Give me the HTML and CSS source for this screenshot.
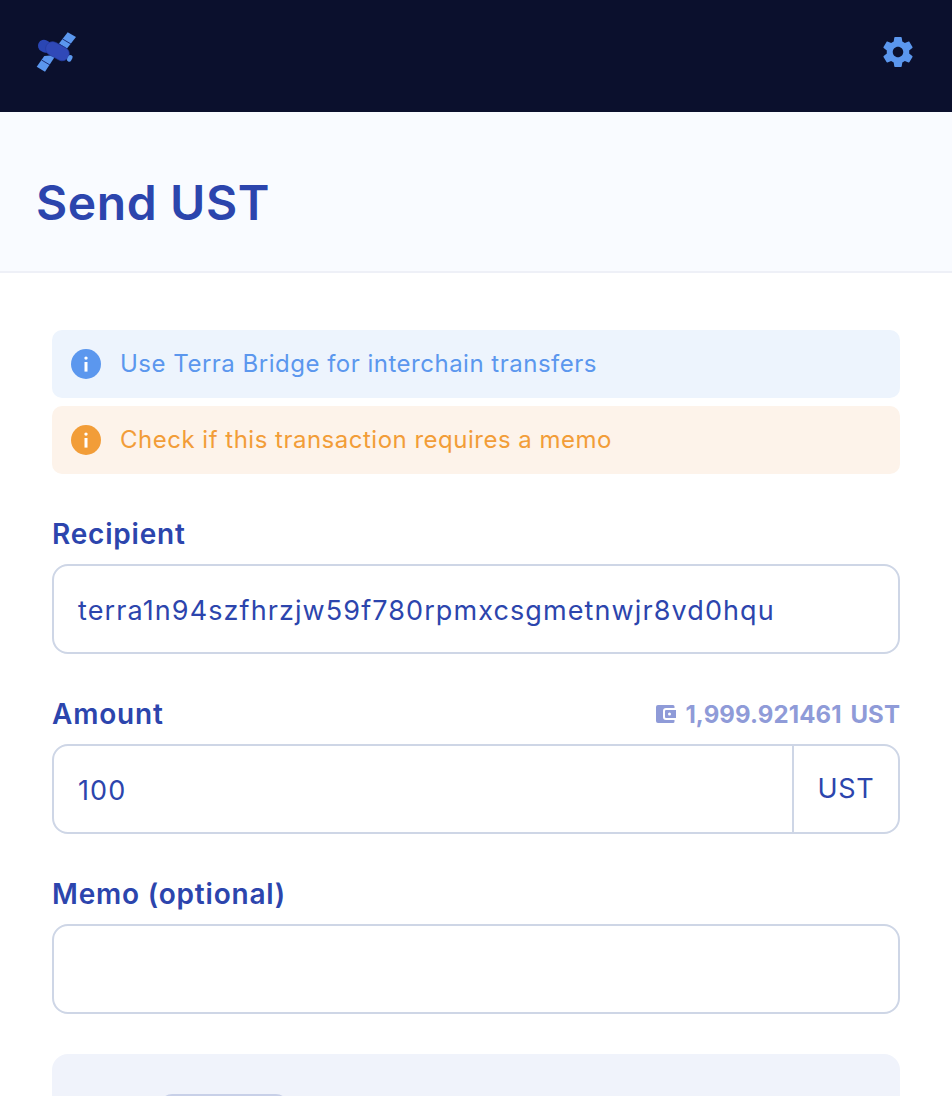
FILE: index.html
```html
<!DOCTYPE html>
<html lang="en">
<head>
<meta charset="utf-8">
<title>Send UST</title>
<link rel="stylesheet" href="styles.css">
</head>
<body>
<header class="topbar">
  <svg class="logo" viewBox="35 31 42 42" width="42" height="42" aria-hidden="true">
    <polygon points="67.700,32.300 76,37 67,48.500 59,43.500" fill="#5b97ee"/>
    <line x1="62.500" y1="39" x2="71" y2="44" stroke="#1c2f78" stroke-width="1"/>
    <polygon points="44.300,56 36.700,66.700 45,71.700 56,55" fill="#5b97ee"/>
    <line x1="41.500" y1="60" x2="50" y2="65" stroke="#1c2f78" stroke-width="1"/>
    <g transform="rotate(28 57 51)">
      <rect x="37" y="46.500" width="14" height="12" rx="6" fill="#2a46b4"/>
      <rect x="45" y="44" width="25" height="14" rx="7" fill="#3049b8" stroke="#243a9c" stroke-width="0.6"/>
      <rect x="69.500" y="48" width="4.500" height="7" rx="2.200" fill="#5b97ee"/>
    </g>
  </svg>
  <svg class="gear" viewBox="0 0 24 24" width="36" height="36" aria-hidden="true">
    <path fill="#5b97ee" d="M19.43 12.98c.04-.32.07-.64.07-.98s-.03-.66-.07-.98l2.11-1.65c.19-.15.24-.42.12-.64l-2-3.46c-.12-.22-.39-.3-.61-.22l-2.49 1c-.52-.4-1.08-.73-1.69-.98l-.38-2.65C14.46 2.18 14.25 2 14 2h-4c-.25 0-.46.18-.49.42l-.38 2.65c-.61.25-1.17.59-1.69.98l-2.49-1c-.23-.09-.49 0-.61.22l-2 3.46c-.13.22-.07.49.12.64l2.11 1.65c-.04.32-.07.65-.07.98s.03.66.07.98l-2.11 1.65c-.19.15-.24.42-.12.64l2 3.46c.12.22.39.3.61.22l2.49-1c.52.4 1.08.73 1.69.98l.38 2.65c.03.24.24.42.49.42h4c.25 0 .46-.18.49-.42l.38-2.65c.61-.25 1.17-.59 1.69-.98l2.49 1c.23.09.49 0 .61-.22l2-3.46c.12-.22.07-.49-.12-.64l-2.11-1.65zM12 15.500c-1.930 0-3.500-1.570-3.500-3.500s1.570-3.500 3.500-3.500 3.500 1.570 3.500 3.500-1.570 3.500-3.500 3.500z"/>
  </svg>
</header>
<section class="titleband">
  <h1 class="title">Send UST</h1>
</section>
<main class="content">
  <div class="alerts">
    <div class="alert alert-info">
      <svg class="alert-icon" viewBox="0 0 30 30" width="30" height="30" aria-hidden="true">
        <circle cx="15" cy="15" r="15" fill="#5b97ee"/>
        <rect x="13.300" y="7.400" width="3.400" height="3.400" rx="1.700" fill="#fff"/>
        <rect x="13.500" y="13" width="3" height="9.600" fill="#fff"/>
      </svg>
      <span>Use Terra Bridge for interchain transfers</span>
    </div>
    <div class="alert alert-warn">
      <svg class="alert-icon" viewBox="0 0 30 30" width="30" height="30" aria-hidden="true">
        <circle cx="15" cy="15" r="15" fill="#f29d38"/>
        <rect x="13.300" y="7.400" width="3.400" height="3.400" rx="1.700" fill="#fff"/>
        <rect x="13.500" y="13" width="3" height="9.600" fill="#fff"/>
      </svg>
      <span>Check if this transaction requires a memo</span>
    </div>
  </div>

  <div class="field">
    <div class="field-head"><span class="label">Recipient</span></div>
    <div class="box"><span class="value">terra1n94szfhrzjw59f780rpmxcsgmetnwjr8vd0hqu</span></div>
  </div>

  <div class="field">
    <div class="field-head">
      <span class="label">Amount</span>
      <span class="balance">
        <svg class="wallet" viewBox="0 0 20 18" width="20" height="18" aria-hidden="true">
          <path fill="#8f9bd8" d="M2 0h15a1.500 1.500 0 0 1 1.500 1.500V3H10a3 3 0 0 0-3 3v6a3 3 0 0 0 3 3h8.500v1.500A1.500 1.500 0 0 1 17 18H2a2 2 0 0 1-2-2V2a2 2 0 0 1 2-2z"/>
          <path fill="#8f9bd8" fill-rule="evenodd" d="M10 5h10v8H10a1 1 0 0 1-1-1V6a1 1 0 0 1 1-1zm3.500 2.500a1.500 1.500 0 1 0 0 3 1.500 1.500 0 0 0 0-3z"/>
        </svg>
        1,999.921461 UST
      </span>
    </div>
    <div class="box box-split">
      <span class="value">100</span>
      <span class="unit">UST</span>
    </div>
  </div>

  <div class="field">
    <div class="field-head"><span class="label">Memo (optional)</span></div>
    <div class="box"></div>
  </div>

  <section class="fee-card">
    <div class="fee-pill"></div>
  </section>
</main>
</body>
</html>
```
FILE: styles.css
```css
* { box-sizing: border-box; }
html, body { margin: 0; height: 1096px; overflow: hidden; background: #fff; }
body { font-family: "Inter", "Noto Sans", sans-serif; color: #2c45ad; }

.topbar {
  height: 112px;
  background: #0b102d;
  display: flex;
  justify-content: space-between;
  align-items: flex-start;
  padding: 31px 36px 0 35px;
}
.logo { display: block; }
.gear { display: block; margin-top: 3px; }

.titleband {
  height: 161px;
  background: #f9fbff;
  border-bottom: 2px solid #eef0f7;
  padding: 22px 36px 0;
  display: flex;
  align-items: center;
}
.title { margin: 0; font-size: 48px; font-weight: 600; line-height: 60px; letter-spacing: 0.6px; }

.content { padding: 57px 52px 0; }

.alerts { display: flex; flex-direction: column; gap: 8px; margin-bottom: 40px; }
.alert {
  height: 68px;
  border-radius: 10px;
  display: flex;
  align-items: center;
  gap: 19px;
  padding: 0 19px 2px;
  font-size: 24px;
  letter-spacing: 0.5px;
}
.alert-info { background: #edf4fd; color: #5b97ee; }
.alert-warn { background: #fdf3ea; color: #f29d38; }
.alert-icon { flex: none; display: block; margin-top: 2px; }

.field { margin-bottom: 40px; }
.field-head {
  height: 50px;
  padding-bottom: 10px;
  display: flex;
  justify-content: space-between;
  align-items: center;
}
.label { font-size: 28px; font-weight: 600; letter-spacing: 0.8px; }
.balance {
  display: flex;
  align-items: center;
  gap: 9px;
  font-size: 24px;
  font-weight: 700;
  letter-spacing: 0.1px;
  word-spacing: 3px;
  color: #8f9bd8;
}
.wallet { display: block; }

.box {
  height: 90px;
  border: 2px solid #ced6e6;
  border-radius: 16px;
  display: flex;
  align-items: center;
  padding-left: 24px;
  background: #fff;
}
.value { font-size: 27px; letter-spacing: 1.1px; padding-top: 2px; }
.box-split { justify-content: space-between; padding-right: 0; }
.unit {
  width: 106px;
  align-self: stretch;
  border-left: 2px solid #ced6e6;
  display: flex;
  align-items: center;
  justify-content: center;
  font-size: 27px;
  letter-spacing: 0.7px;
  padding-bottom: 2px;
}

.fee-card {
  height: 42px;
  overflow: hidden;
  background: #f0f3fb;
  border-radius: 16px 16px 0 0;
  padding: 40px 0 0 108px;
}
.fee-pill { width: 128px; height: 40px; border-radius: 12px 12px 0 0; background: #c8d0e8; }
```
